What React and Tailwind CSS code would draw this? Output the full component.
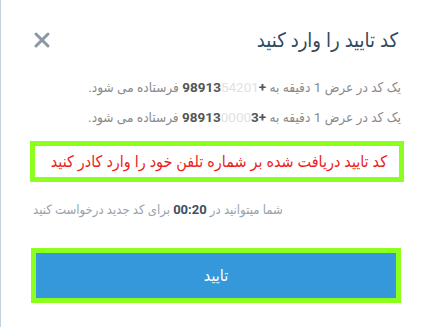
import { X } from "lucide-react";

export default function App() {
  return (
    <div
      dir="rtl"
      className="w-[429px] h-[327px] bg-white border-l border-[#c3d1de] overflow-hidden"
      style={{ fontFamily: "Roboto, 'DejaVu Sans Condensed', 'DejaVu Sans', sans-serif" }}
    >
      {/* Header */}
      <div className="flex items-center justify-between pt-[27px] pr-[31px] pl-[29px] h-[53px]">
        <h2 className="text-[20px] leading-none text-[#34495e]">کد تایید را وارد کنید</h2>
        <button className="text-[#8b97a4]">
          <X className="w-[24px] h-[24px]" strokeWidth={3} />
        </button>
      </div>

      {/* Info lines */}
      <div className="pr-[28px] pl-[30px] mt-[26px] text-[13.5px] text-[#8a8a8a] flex flex-col gap-[14px]">
        <p className="leading-[16px] whitespace-nowrap">
          یک کد در عرض 1 دقیقه به <span className="font-bold text-[#555]">+98913<span className="text-[#e2e2e2] font-normal">54201</span></span> فرستاده می شود.
        </p>
        <p className="leading-[16px] whitespace-nowrap">
          یک کد در عرض 1 دقیقه به <span className="font-bold text-[#555]">+98913<span className="text-[#e2e2e2] font-normal">0000</span>3</span> فرستاده می شود.
        </p>
      </div>

      {/* Highlighted message */}
      <div className="mr-[25px] ml-[29px] mt-[16px] h-[41px] border-[5px] border-[#8cff1f] flex items-center pr-[12px] overflow-hidden">
        <p className="text-[16px] leading-none text-[#ee1c1c] whitespace-nowrap">
          کد تایید دریافت شده بر شماره تلفن خود را وارد کادر کنید
        </p>
      </div>

      {/* Countdown */}
      <p className="pr-[28px] pl-[32px] mt-[20px] text-[13px] leading-[16px] text-[#9aa3ad] text-left">
        شما میتوانید در <span className="font-bold text-[#3d4f61]">00:20</span> برای کد جدید درخواست کنید
      </p>

      {/* Submit */}
      <div className="mr-[28px] ml-[30px] mt-[30px]">
        <button className="w-full h-[55px] border-[5px] border-[#8cff1f] bg-[#3598db] text-white text-[16px]">
          تایید
        </button>
      </div>
    </div>
  );
}
